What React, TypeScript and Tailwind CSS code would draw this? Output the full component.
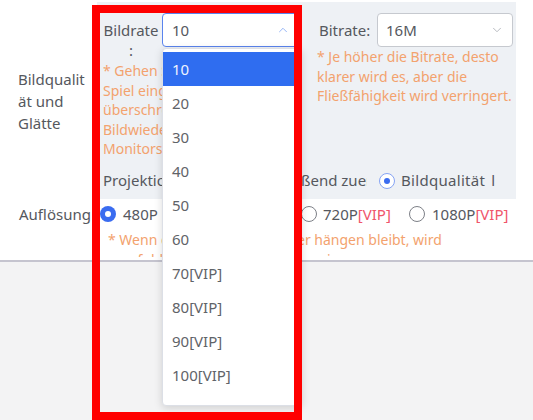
import { ChevronUp, ChevronDown } from "lucide-react";

function Radio({ kind }: { kind: "solid" | "ring" | "off" }) {
  if (kind === "solid")
    return (
      <span className="w-[16px] h-[16px] rounded-full bg-[#3a6cf0] flex items-center justify-center shrink-0">
        <span className="w-[6px] h-[6px] rounded-full bg-white" />
      </span>
    );
  if (kind === "ring")
    return (
      <span className="w-[16px] h-[16px] rounded-full border border-[#86a4f4] bg-white flex items-center justify-center shrink-0">
        <span className="w-[6px] h-[6px] rounded-full bg-[#3a6cf0]" />
      </span>
    );
  return <span className="w-[16px] h-[16px] rounded-full border border-[#7d8087] bg-white shrink-0" />;
}

const items = ["10", "20", "30", "40", "50", "60", "70[VIP]", "80[VIP]", "90[VIP]", "100[VIP]", "110[VIP]"];

export default function App() {
  return (
    <div className="relative w-[533px] h-[420px] overflow-hidden bg-white font-['Noto_Sans',sans-serif] text-[15px] text-[#55585e]">
      <div className="h-[260px] pt-[2px] flex flex-col">
        {/* Row 1 */}
        <div className="flex items-center h-[197px] shrink-0">
          <div className="w-[97px] pl-[18px] leading-[22px] whitespace-nowrap">
            Bildqualit
            <br />
            ät und
            <br />
            Glätte
          </div>
          <div className="w-[419px] h-full bg-[#eef1f5] pl-[3px] pt-[11px]">
            <div className="flex gap-[15px]">
              {/* col 1 */}
              <div className="w-[202px]">
                <div className="flex items-start">
                  <div className="w-[62px] text-center leading-[20px] pt-[7px] whitespace-nowrap">
                    Bildrate
                    <br />:
                  </div>
                  <div className="relative w-[140px]">
                    <div className="h-[34px] rounded-[4px] border border-[#5a84ee] bg-white flex items-center justify-between pl-[9px] pr-[11px]">
                      <span>10</span>
                      <ChevronUp size={14} strokeWidth={1.6} className="text-[#8fb0f5]" />
                    </div>
                    <div className="absolute z-10 left-0 top-[35px] w-[140px] h-[358px] overflow-hidden rounded-[4px] border border-[#dcdfe6] bg-white shadow-[0_2px_8px_rgba(0,0,0,0.15)] pt-[3px]">
                      {items.map((it, i) => (
                        <div
                          key={it}
                          className={
                            i === 0
                              ? "h-[34px] flex items-center pl-[9px] bg-[#2f6df0] text-[#eef3ff]"
                              : "h-[34px] flex items-center pl-[9px] text-[#5f6368]"
                          }
                        >
                          {it}
                        </div>
                      ))}
                    </div>
                  </div>
                </div>
                <div className="pl-[3px] mt-[1px] text-[14px] leading-[19.5px] text-[#f3a26e] whitespace-nowrap">
                  * Gehen Sie sicher, dass die
                  <br />
                  Spiel eingestellt ist, und
                  <br />
                  überschreiten Sie nicht
                  <br />
                  Bildwiederholrate des
                  <br />
                  Monitors.
                </div>
              </div>
              {/* col 2 */}
              <div className="w-[196px]">
                <div className="flex items-center">
                  <div className="w-[60px] pl-[2px] whitespace-nowrap">Bitrate:</div>
                  <div className="w-[136px] h-[34px] rounded-[4px] border border-[#c6c9cf] bg-white flex items-center justify-between pl-[8px] pr-[8px]">
                    <span>16M</span>
                    <ChevronDown size={14} strokeWidth={1.6} className="text-[#b3b6bc]" />
                  </div>
                </div>
                <div className="text-[14px] leading-[19.5px] text-[#f3a26e] whitespace-nowrap">
                  * Je höher die Bitrate, desto
                  <br />
                  klarer wird es, aber die
                  <br />
                  Fließfähigkeit wird verringert.
                </div>
              </div>
            </div>
            {/* projection row */}
            <div className="flex items-center h-[22px] mt-[11px] pl-[3px]">
              <div className="w-[152px] overflow-hidden whitespace-nowrap">Projektionsmodus:</div>
              <Radio kind="off" />
              <div className="ml-[6px] w-[90px] overflow-hidden whitespace-nowrap">Fließend zuerst</div>
              <span className="ml-[12px]">
                <Radio kind="ring" />
              </span>
              <div className="ml-[6px] w-[96px] overflow-hidden whitespace-nowrap tracking-[0.3px]">
                Bildqualität<span className="ml-[6px]">l</span>
              </div>
            </div>
          </div>
        </div>
        {/* Row 2 */}
        <div className="flex h-[58px] overflow-hidden shrink-0">
          <div className="w-[97px] pl-[19px] pt-[5px] leading-[20px] whitespace-nowrap">Auflösung</div>
          <div className="pl-[3px] pt-[5px]">
            <div className="flex items-center h-[20px]">
              <div className="w-[201px] flex items-center gap-[7px]">
                <Radio kind="solid" />
                <span>480P</span>
              </div>
              <div className="w-[108px] flex items-center gap-[6px]">
                <Radio kind="off" />
                <span>
                  720P<span className="text-[#f0556a]">[VIP]</span>
                </span>
              </div>
              <div className="flex items-center gap-[7px]">
                <Radio kind="off" />
                <span>
                  1080P<span className="text-[#f0556a]">[VIP]</span>
                </span>
              </div>
            </div>
            <div className="pl-[8px] mt-[6px] text-[14px] leading-[19.5px] text-[#f3a26e] whitespace-nowrap">
              * Wenn das Spielbild hakt oder hängen bleibt, wird
              <br />
              empfohlen, die Auflösung zu verringern.
            </div>
          </div>
        </div>
      </div>
      <div className="h-[2px] bg-[#c5c4cf]" />
      <div className="h-[158px] bg-[#f3f3f4]" />
      <div className="absolute z-20 left-[92px] top-[5px] w-[210px] h-[415px] border-[8px] border-[#ff0000] pointer-events-none" />
    </div>
  );
}
